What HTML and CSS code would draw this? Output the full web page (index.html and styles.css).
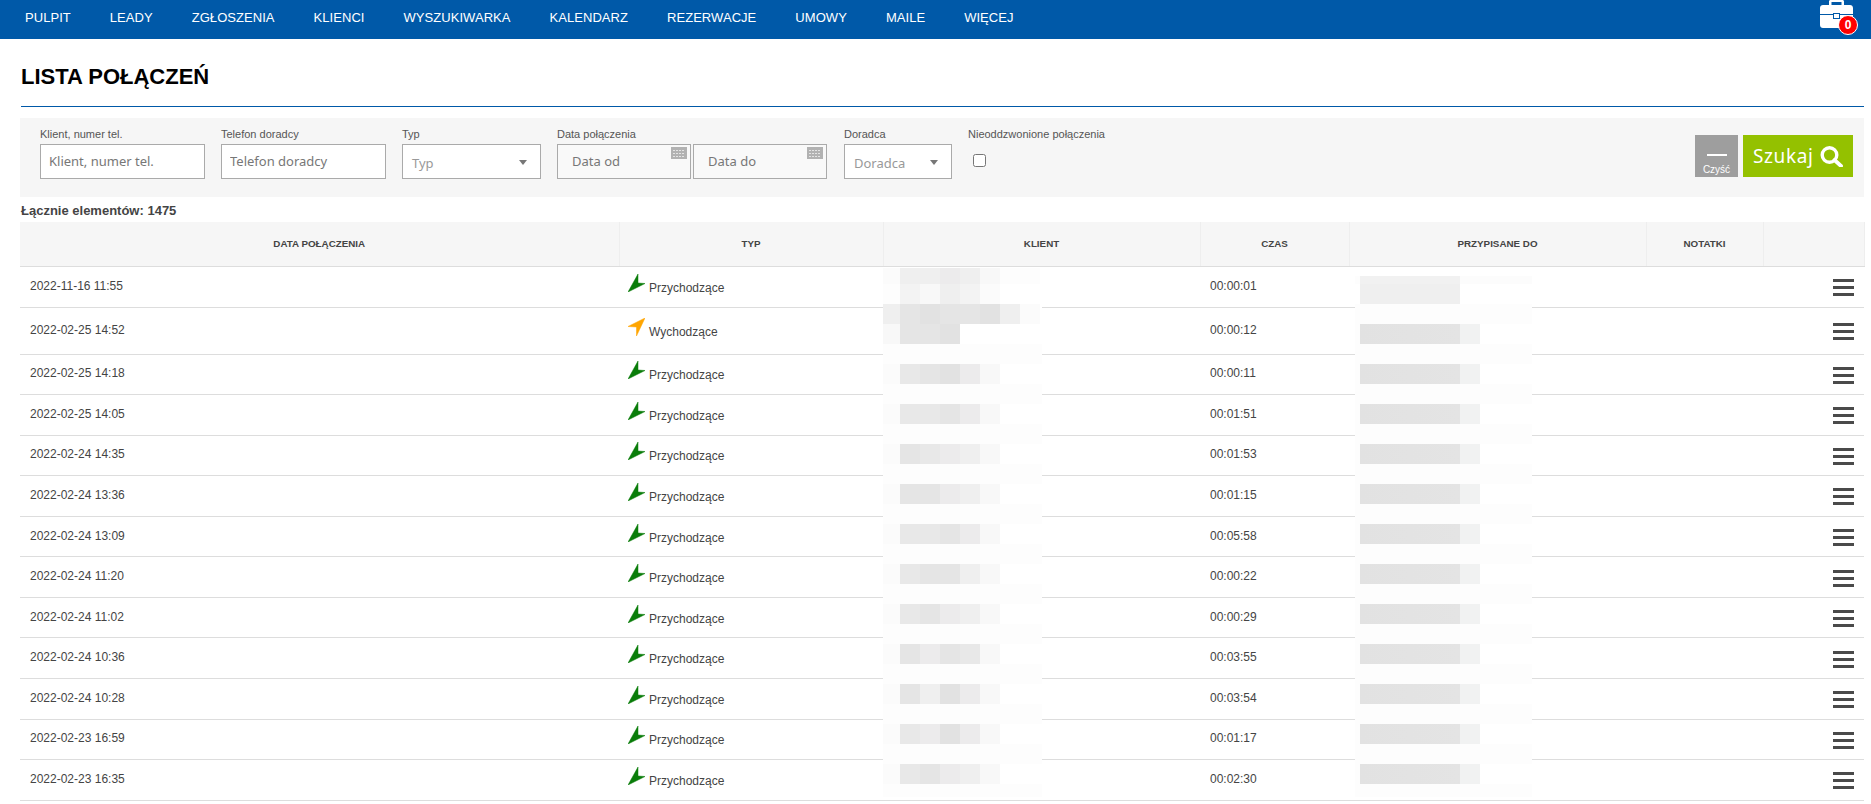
FILE: index.html
```html
<!DOCTYPE html>
<html lang="pl">
<head>
<meta charset="utf-8">
<title>Lista połączeń</title>
<link rel="stylesheet" href="styles.css">
</head>
<body>
<header class="topbar">
  <nav class="menu">
    <a>PULPIT</a><a>LEADY</a><a>ZGŁOSZENIA</a><a>KLIENCI</a><a>WYSZUKIWARKA</a><a>KALENDARZ</a><a>REZERWACJE</a><a>UMOWY</a><a>MAILE</a><a>WIĘCEJ</a>
  </nav>
  <div class="case">
    <svg width="33" height="28" viewBox="0 0 33 28"><path fill="#fff" d="M9 5V1.500C9 .6 9.600 0 10.500 0h12C23.400 0 24 .6 24 1.500V5h6c1.700 0 3 1.300 3 3v6H20v-1h-7v1H0V8c0-1.700 1.300-3 3-3zm2.500-3v3h10V2zM0 15h13v4h7v-4h13v10c0 1.700-1.300 3-3 3H3c-1.700 0-3-1.300-3-3z"/><rect x="14" y="14" width="5" height="4" fill="#fff"/></svg>
    <span class="badge">0</span>
  </div>
</header>

<main class="page">
  <h1 class="title">LISTA POŁĄCZEŃ</h1>

  <form class="filters">
    <div class="field f-client"><label>Klient, numer tel.</label><input class="input" placeholder="Klient, numer tel."></div>
    <div class="field f-phone"><label>Telefon doradcy</label><input class="input" placeholder="Telefon doradcy"></div>
    <div class="field f-type"><label>Typ</label><div class="select">Typ<i class="caret"></i></div></div>
    <div class="field f-dates"><label>Data połączenia</label>
      <div class="dates">
        <div class="date d-from"><input class="input date-input" placeholder="Data od"><svg class="cal" width="16" height="12"><rect width="16" height="12" fill="#b2b2b2"/><g fill="#e4e4e4"><rect x="2" y="3" width="2" height="1"/><rect x="5" y="3" width="2" height="1"/><rect x="8" y="3" width="2" height="1"/><rect x="11" y="3" width="2" height="1"/><rect x="2" y="6" width="2" height="1"/><rect x="5" y="6" width="2" height="1"/><rect x="8" y="6" width="2" height="1"/><rect x="11" y="6" width="2" height="1"/><rect x="2" y="9" width="2" height="1"/><rect x="5" y="9" width="2" height="1"/><rect x="8" y="9" width="2" height="1"/><rect x="11" y="9" width="2" height="1"/></g></svg></div>
        <div class="date d-to"><input class="input date-input" placeholder="Data do"><svg class="cal" width="16" height="12"><rect width="16" height="12" fill="#b2b2b2"/><g fill="#e4e4e4"><rect x="2" y="3" width="2" height="1"/><rect x="5" y="3" width="2" height="1"/><rect x="8" y="3" width="2" height="1"/><rect x="11" y="3" width="2" height="1"/><rect x="2" y="6" width="2" height="1"/><rect x="5" y="6" width="2" height="1"/><rect x="8" y="6" width="2" height="1"/><rect x="11" y="6" width="2" height="1"/><rect x="2" y="9" width="2" height="1"/><rect x="5" y="9" width="2" height="1"/><rect x="8" y="9" width="2" height="1"/><rect x="11" y="9" width="2" height="1"/></g></svg></div>
      </div>
    </div>
    <div class="field f-agent"><label>Doradca</label><div class="select">Doradca<i class="caret"></i></div></div>
    <div class="field f-missed"><label>Nieoddzwonione połączenia</label><input class="check" type="checkbox"></div>
    <div class="actions">
      <button type="button" class="btn-clear"><span class="dash"></span>Czyść</button>
      <button type="button" class="btn-search">Szukaj<svg width="23" height="21" viewBox="0 0 23 21"><circle cx="9.500" cy="9" r="7.300" fill="none" stroke="#fff" stroke-width="3.400"/><path d="M14.500 14l6.500 6" stroke="#fff" stroke-width="3.800" stroke-linecap="round"/></svg></button>
    </div>
  </form>

  <p class="total">Łącznie elementów: 1475</p>

  <div class="table-wrap">
    <table class="calls">
      <colgroup><col class="c1"><col class="c2"><col class="c3"><col class="c4"><col class="c5"><col class="c6"><col class="c7"></colgroup>
      <thead><tr><th>DATA POŁĄCZENIA</th><th>TYP</th><th>KLIENT</th><th>CZAS</th><th>PRZYPISANE DO</th><th>NOTATKI</th><th></th></tr></thead>
      <tbody>
        <tr class="r1"><td>2022-11-16 11:55</td><td class="type"><svg class="arrow in" width="17" height="18" viewBox="0 0 17 18"><path d="M0 18L10 0v9l7 .5z"/></svg>Przychodzące</td><td></td><td>00:00:01</td><td></td><td></td><td class="more"><svg width="21" height="17"><rect width="21" height="3"/><rect y="7" width="21" height="3"/><rect y="14" width="21" height="3"/></svg></td></tr>
        <tr class="r2"><td>2022-02-25 14:52</td><td class="type"><svg class="arrow out" width="17" height="18" viewBox="0 0 17 18"><path d="M17 0L0 8.500l8.500 .5V18z"/></svg>Wychodzące</td><td></td><td>00:00:12</td><td></td><td></td><td class="more"><svg width="21" height="17"><rect width="21" height="3"/><rect y="7" width="21" height="3"/><rect y="14" width="21" height="3"/></svg></td></tr>
        <tr><td>2022-02-25 14:18</td><td class="type"><svg class="arrow in" width="17" height="18" viewBox="0 0 17 18"><path d="M0 18L10 0v9l7 .5z"/></svg>Przychodzące</td><td></td><td>00:00:11</td><td></td><td></td><td class="more"><svg width="21" height="17"><rect width="21" height="3"/><rect y="7" width="21" height="3"/><rect y="14" width="21" height="3"/></svg></td></tr>
        <tr><td>2022-02-25 14:05</td><td class="type"><svg class="arrow in" width="17" height="18" viewBox="0 0 17 18"><path d="M0 18L10 0v9l7 .5z"/></svg>Przychodzące</td><td></td><td>00:01:51</td><td></td><td></td><td class="more"><svg width="21" height="17"><rect width="21" height="3"/><rect y="7" width="21" height="3"/><rect y="14" width="21" height="3"/></svg></td></tr>
        <tr><td>2022-02-24 14:35</td><td class="type"><svg class="arrow in" width="17" height="18" viewBox="0 0 17 18"><path d="M0 18L10 0v9l7 .5z"/></svg>Przychodzące</td><td></td><td>00:01:53</td><td></td><td></td><td class="more"><svg width="21" height="17"><rect width="21" height="3"/><rect y="7" width="21" height="3"/><rect y="14" width="21" height="3"/></svg></td></tr>
        <tr><td>2022-02-24 13:36</td><td class="type"><svg class="arrow in" width="17" height="18" viewBox="0 0 17 18"><path d="M0 18L10 0v9l7 .5z"/></svg>Przychodzące</td><td></td><td>00:01:15</td><td></td><td></td><td class="more"><svg width="21" height="17"><rect width="21" height="3"/><rect y="7" width="21" height="3"/><rect y="14" width="21" height="3"/></svg></td></tr>
        <tr><td>2022-02-24 13:09</td><td class="type"><svg class="arrow in" width="17" height="18" viewBox="0 0 17 18"><path d="M0 18L10 0v9l7 .5z"/></svg>Przychodzące</td><td></td><td>00:05:58</td><td></td><td></td><td class="more"><svg width="21" height="17"><rect width="21" height="3"/><rect y="7" width="21" height="3"/><rect y="14" width="21" height="3"/></svg></td></tr>
        <tr><td>2022-02-24 11:20</td><td class="type"><svg class="arrow in" width="17" height="18" viewBox="0 0 17 18"><path d="M0 18L10 0v9l7 .5z"/></svg>Przychodzące</td><td></td><td>00:00:22</td><td></td><td></td><td class="more"><svg width="21" height="17"><rect width="21" height="3"/><rect y="7" width="21" height="3"/><rect y="14" width="21" height="3"/></svg></td></tr>
        <tr><td>2022-02-24 11:02</td><td class="type"><svg class="arrow in" width="17" height="18" viewBox="0 0 17 18"><path d="M0 18L10 0v9l7 .5z"/></svg>Przychodzące</td><td></td><td>00:00:29</td><td></td><td></td><td class="more"><svg width="21" height="17"><rect width="21" height="3"/><rect y="7" width="21" height="3"/><rect y="14" width="21" height="3"/></svg></td></tr>
        <tr><td>2022-02-24 10:36</td><td class="type"><svg class="arrow in" width="17" height="18" viewBox="0 0 17 18"><path d="M0 18L10 0v9l7 .5z"/></svg>Przychodzące</td><td></td><td>00:03:55</td><td></td><td></td><td class="more"><svg width="21" height="17"><rect width="21" height="3"/><rect y="7" width="21" height="3"/><rect y="14" width="21" height="3"/></svg></td></tr>
        <tr><td>2022-02-24 10:28</td><td class="type"><svg class="arrow in" width="17" height="18" viewBox="0 0 17 18"><path d="M0 18L10 0v9l7 .5z"/></svg>Przychodzące</td><td></td><td>00:03:54</td><td></td><td></td><td class="more"><svg width="21" height="17"><rect width="21" height="3"/><rect y="7" width="21" height="3"/><rect y="14" width="21" height="3"/></svg></td></tr>
        <tr><td>2022-02-23 16:59</td><td class="type"><svg class="arrow in" width="17" height="18" viewBox="0 0 17 18"><path d="M0 18L10 0v9l7 .5z"/></svg>Przychodzące</td><td></td><td>00:01:17</td><td></td><td></td><td class="more"><svg width="21" height="17"><rect width="21" height="3"/><rect y="7" width="21" height="3"/><rect y="14" width="21" height="3"/></svg></td></tr>
        <tr><td>2022-02-23 16:35</td><td class="type"><svg class="arrow in" width="17" height="18" viewBox="0 0 17 18"><path d="M0 18L10 0v9l7 .5z"/></svg>Przychodzące</td><td></td><td>00:02:30</td><td></td><td></td><td class="more"><svg width="21" height="17"><rect width="21" height="3"/><rect y="7" width="21" height="3"/><rect y="14" width="21" height="3"/></svg></td></tr>
      </tbody>
    </table>

    <div class="mosaic m-client">
      <div class="strip s16"><b class="h"></b><b class="e"></b><b class="e"></b><b class="d"></b><b class="e"></b><b class="g"></b><b class="i"></b><b class="i"></b></div>
      <div class="strip"><b class="i"></b><b class="f"></b><b class="g"></b><b class="e"></b><b class="f"></b><b class="h"></b><b></b><b></b></div>
      <div class="strip"><b class="e"></b><b class="b"></b><b class="a"></b><b class="b"></b><b class="b"></b><b class="a"></b><b class="e"></b><b class="h"></b></div>
      <div class="strip white"><b class="g"></b><b class="b"></b><b class="b"></b><b class="a"></b><b></b><b></b><b></b><b></b></div>
      <div class="strip band"></div>
      <div class="strip"><b class="h"></b><b class="c"></b><b class="b"></b><b class="a"></b><b class="d"></b><b class="g"></b></div>
      <div class="strip band"></div>
      <div class="strip"><b class="h"></b><b class="c"></b><b class="c"></b><b class="b"></b><b class="d"></b><b class="g"></b></div>
      <div class="strip band"></div>
      <div class="strip"><b class="h"></b><b class="b"></b><b class="c"></b><b class="d"></b><b class="e"></b><b class="g"></b></div>
      <div class="strip band"></div>
      <div class="strip"><b class="h"></b><b class="b"></b><b class="b"></b><b class="d"></b><b class="e"></b><b class="g"></b></div>
      <div class="strip band"></div>
      <div class="strip"><b class="h"></b><b class="c"></b><b class="c"></b><b class="b"></b><b class="d"></b><b class="g"></b></div>
      <div class="strip band"></div>
      <div class="strip"><b class="h"></b><b class="c"></b><b class="b"></b><b class="b"></b><b class="e"></b><b class="g"></b></div>
      <div class="strip band"></div>
      <div class="strip"><b class="h"></b><b class="c"></b><b class="b"></b><b class="d"></b><b class="e"></b><b class="g"></b></div>
      <div class="strip band"></div>
      <div class="strip"><b class="h"></b><b class="b"></b><b class="d"></b><b class="b"></b><b class="c"></b><b class="g"></b></div>
      <div class="strip band"></div>
      <div class="strip"><b class="h"></b><b class="b"></b><b class="e"></b><b class="a"></b><b class="d"></b><b class="g"></b></div>
      <div class="strip band"></div>
      <div class="strip"><b class="h"></b><b class="c"></b><b class="d"></b><b class="a"></b><b class="d"></b><b class="g"></b></div>
      <div class="strip band"></div>
      <div class="strip"><b class="h"></b><b class="c"></b><b class="b"></b><b class="d"></b><b class="e"></b><b class="g"></b></div>
      <div class="strip band end"></div>
    </div>

    <div class="mosaic m-agent">
      <div class="line first-a"></div>
      <div class="line first-b"></div>
      <div class="strip band"></div><div class="line"></div>
      <div class="strip band"></div><div class="line"></div>
      <div class="strip band"></div><div class="line"></div>
      <div class="strip band"></div><div class="line"></div>
      <div class="strip band"></div><div class="line"></div>
      <div class="strip band"></div><div class="line"></div>
      <div class="strip band"></div><div class="line"></div>
      <div class="strip band"></div><div class="line"></div>
      <div class="strip band"></div><div class="line"></div>
      <div class="strip band"></div><div class="line"></div>
      <div class="strip band"></div><div class="line"></div>
      <div class="strip band"></div><div class="line"></div>
      <div class="strip band end"></div>
    </div>
  </div>
</main>
</body>
</html>
```

FILE: styles.css
```css
* { box-sizing: border-box; }
html, body { margin: 0; padding: 0; }
body { background: #fff; color: #444; font-family: "Liberation Sans", Arial, sans-serif; font-size: 12px; }

.topbar { height: 39px; background: #0059a8; display: flex; justify-content: space-between; padding: 0 18px 0 25px; }
.menu { display: flex; gap: 39px; }
.menu a { color: #fff; font-size: 13px; letter-spacing: .05px; line-height: 36px; }
.case { position: relative; width: 33px; height: 28px; }
.case svg { display: block; }
.badge { position: absolute; left: 18px; top: 15px; width: 20px; height: 20px; border-radius: 50%; background: #f00; border: 1px solid #fff; color: #fff; font-size: 12px; font-weight: bold; line-height: 18px; text-align: center; }

.page { padding: 0 7px 0 20px; }
.title { margin: 0 0 0 1px; height: 68px; padding-top: 25px; border-bottom: 1px solid #0059a8; color: #000; font-size: 22px; font-weight: bold; line-height: 26px; }

.filters { margin-top: 11px; height: 79px; background: #f6f6f6; display: flex; align-items: flex-start; padding: 10px 11px 0 20px; }
.field label { display: block; height: 16px; color: #555; font-size: 11px; line-height: 13px; }
.f-client, .f-phone { width: 165px; margin-right: 16px; }
.f-type { width: 139px; margin-right: 16px; }
.f-dates { width: 270px; margin-right: 17px; }
.f-agent { width: 108px; margin-right: 16px; }
.input { display: block; width: 100%; height: 35px; border: 1px solid #aaa; background: #fff; padding: 0 8px 2px; font-family: "Noto Sans", sans-serif; font-size: 13px; color: #777; border-radius: 0; outline: 0; }
.input::placeholder { color: #777; opacity: 1; }
.dates { display: flex; gap: 2px; }
.date { position: relative; }
.d-from { width: 134px; }
.d-to { width: 134px; }
.date-input { padding-left: 14px; background: #f9f9f9; border-color: #aaa; }
.cal { position: absolute; top: 3px; right: 4px; }
.select { position: relative; height: 35px; border: 1px solid #aaa; background: #fff; padding-left: 9px; font-family: "Noto Sans", sans-serif; font-size: 13px; line-height: 36px; color: #999; }
.caret { position: absolute; right: 13px; top: 15px; width: 0; height: 0; border-left: 4.500px solid transparent; border-right: 4.500px solid transparent; border-top: 5px solid #777; }
.check { display: block; width: 13px; height: 13px; margin: 10px 0 0 5px; }

.actions { display: flex; gap: 5px; margin-left: auto; margin-top: 7px; }
.btn-clear { width: 43px; height: 42px; border: 0; background: #9e9e9e; color: #fff; padding: 0; font-family: "Liberation Sans", sans-serif; font-size: 10px; display: flex; flex-direction: column; align-items: center; }
.dash { display: block; width: 20px; height: 2px; background: #fff; margin: 19px 0 8px; }
.btn-search { width: 110px; height: 42px; border: 0; background: #94c100; color: #fff; padding: 0 0 0 10px; font-family: "Noto Sans", sans-serif; font-size: 19px; letter-spacing: .6px; display: flex; align-items: center; gap: 7px; }

.total { margin: 0 0 0 1px; height: 25px; padding-top: 6px; color: #444; font-size: 13px; font-weight: bold; line-height: 15px; }

.table-wrap { position: relative; }
.calls { width: 1844px; table-layout: fixed; border-collapse: collapse; }
.c1 { width: 599px; } .c2 { width: 264px; } .c3 { width: 317px; } .c4 { width: 149px; } .c5 { width: 297px; } .c6 { width: 117px; } .c7 { width: 101px; }
.calls th { height: 44px; background: #f6f6f6; border-bottom: 1px solid #ddd; border-right: 1px solid #eee; padding: 0; color: #444; font-size: 9.800px; font-weight: bold; text-align: center; }
.calls td { height: 40.570px; border-bottom: 1px solid #ddd; padding: 0 10px 2px; color: #444; font-size: 12px; }
.calls .r1 td { height: 41px; }
.calls .r2 td { height: 47px; }
.calls .type { padding: 0 10px 5px 9px; }
.arrow { margin-right: 4px; }
.arrow.in path { fill: #0a7d0a; stroke: #0a7d0a; stroke-width: .5px; }
.arrow.out path { fill: #ffa500; stroke: #ffa500; stroke-width: .5px; }
.calls .more { padding: 2px 10px 0 0; text-align: right; }
.more svg { fill: #4a4a4a; vertical-align: -4px; }

.mosaic { position: absolute; display: flex; flex-direction: column; }
.m-client { left: 863px; top: 46px; width: 159px; }
.m-agent { left: 1335px; top: 54px; width: 177px; }
.strip { display: flex; height: 20px; background: #fff; }
.strip.s16 { height: 16px; }
.strip b { display: block; width: 20px; }
.strip b:first-child { width: 17px; }
.band { background: #fdfdfd; }
.band.end { height: 13px; }
.line { height: 20px; background: linear-gradient(to right, #fdfdfd 5px, #e2e2e2 5px, #e4e4e4 105px, #f1f2f2 105px, #f1f2f2 125px, #fff 125px); }
.first-a { height: 8px; background: linear-gradient(to right, #fdfdfd 5px, #f1f1f1 5px, #f1f1f1 105px, #fcfcfc 105px); }
.first-b { height: 20px; background: linear-gradient(to right, #fff 5px, #efefef 5px, #efefef 105px, #fff 105px); }
.a { background: #e2e2e2; } .b { background: #e5e5e5; } .c { background: #e8e8e8; } .d { background: #ecebec; } .e { background: #efefef; } .f { background: #f3f3f3; } .g { background: #f8f8f8; } .h { background: #fbfbfb; } .i { background: #fdfdfd; }
```
